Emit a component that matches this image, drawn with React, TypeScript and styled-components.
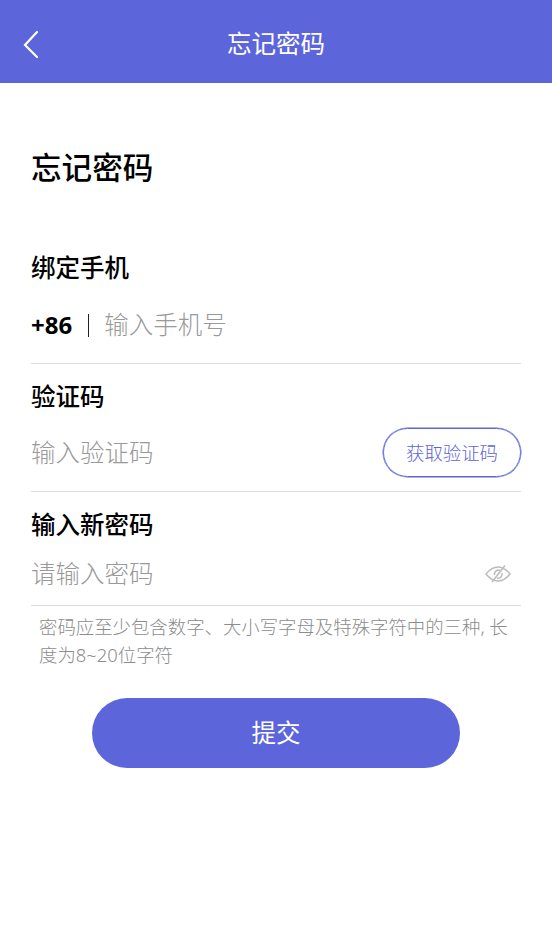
import React from "react";
import styled, { createGlobalStyle } from "styled-components";

const Global = createGlobalStyle`
  html, body { margin: 0; padding: 0; background: #fff; }
  body { font-family: "Noto Sans", "Noto Sans CJK SC", sans-serif; font-weight: 300; }
  * { box-sizing: border-box; }
`;
const Page = styled.div`width: 552px; height: 952px; background: #fff; overflow: hidden;`;
const Header = styled.header`
  height: 83px; background: #5d65db; display: flex; align-items: center; justify-content: center;
  position: relative; color: #fff; font-size: 24.5px; font-weight: 400; line-height: 1; padding-top: 5px;
`;
const Back = styled.svg`position: absolute; left: 22px; top: 29px; width: 18px; height: 30px;`;
const Main = styled.main`padding: 63px 31px 0;`;
const Title = styled.h1`margin: 0 0 63px; font-size: 30.6px; line-height: 42px; font-weight: 500; color: #000;`;
const Field = styled.section`& + & { margin-top: 16px; }`;
const Label = styled.div`font-size: 24.5px; line-height: 34px; font-weight: 500; color: #000;`;
const Row = styled.div<{ $h: number }>`
  height: ${p => p.$h}px; display: flex; align-items: center; border-bottom: 1px solid #dddddd; width: 490px;
  padding-top: 2px;
`;
const Prefix = styled.span`font-size: 24px; font-weight: 700; color: #000; line-height: 1;`;
const Divider = styled.span`width: 1px; height: 23px; background: #222; margin: 0 15px 0 16px;`;
const Placeholder = styled.span`font-size: 24.5px; color: #999; line-height: 1; flex: 1;`;
const CodeButton = styled.div`
  width: 138px; height: 49px; border: 1px solid #5d65db; box-shadow: 0 0 0 0.5px #5d65db; border-radius: 25px; color: #5d65db;
  font-size: 18.4px; display: flex; align-items: center; justify-content: center; margin-top: -2px; padding-bottom: 2px;
`;
const Eye = styled.svg`width: 26px; height: 20px; margin: -2px 10px 0 0;`;
const Hint = styled.p`
  margin: 0; padding: 7px 8px 0; font-size: 18.4px; line-height: 28px; color: #8c8c8c; width: 490px;
`;
const Submit = styled.div`
  margin: 29px 0 0 61px; width: 368px; height: 70px; border-radius: 35px; background: #5d65db; color: #fff;
  font-size: 24.5px; font-weight: 400; display: flex; align-items: center; justify-content: center; padding-bottom: 3px;
`;

export default function App() {
  return (
    <Page>
      <Global />
      <Header>
        <Back viewBox="0 0 18 30" fill="none">
          <path d="M15 3 L3 16 L15 28" stroke="#fff" strokeWidth="2.2" strokeLinecap="round" strokeLinejoin="miter" />
        </Back>
        忘记密码
      </Header>
      <Main>
        <Title>忘记密码</Title>
        <Field>
          <Label>绑定手机</Label>
          <Row $h={79}>
            <Prefix>+86</Prefix>
            <Divider />
            <Placeholder>输入手机号</Placeholder>
          </Row>
        </Field>
        <Field>
          <Label>验证码</Label>
          <Row $h={78}>
            <Placeholder>输入验证码</Placeholder>
            <CodeButton>获取验证码</CodeButton>
          </Row>
        </Field>
        <Field>
          <Label>输入新密码</Label>
          <Row $h={64}>
            <Placeholder>请输入密码</Placeholder>
            <Eye viewBox="0 0 26 20" fill="none" stroke="#bcbcbc" strokeWidth="1.5">
              <path d="M1 10 C5 5 9 3 13 3 C17 3 21 5 25 10 C21 15 17 17 13 17 C9 17 5 15 1 10 Z" />
              <path d="M9.5 11 A4 4 0 0 1 15 6.5" />
              <path d="M17 9 A4 4 0 0 1 12 14" />
              <path d="M20 1.5 L7 18" />
            </Eye>
          </Row>
        </Field>
        <Hint>密码应至少包含数字、大小写字母及特殊字符中的三种, 长度为8~20位字符</Hint>
        <Submit>提交</Submit>
      </Main>
    </Page>
  );
}
